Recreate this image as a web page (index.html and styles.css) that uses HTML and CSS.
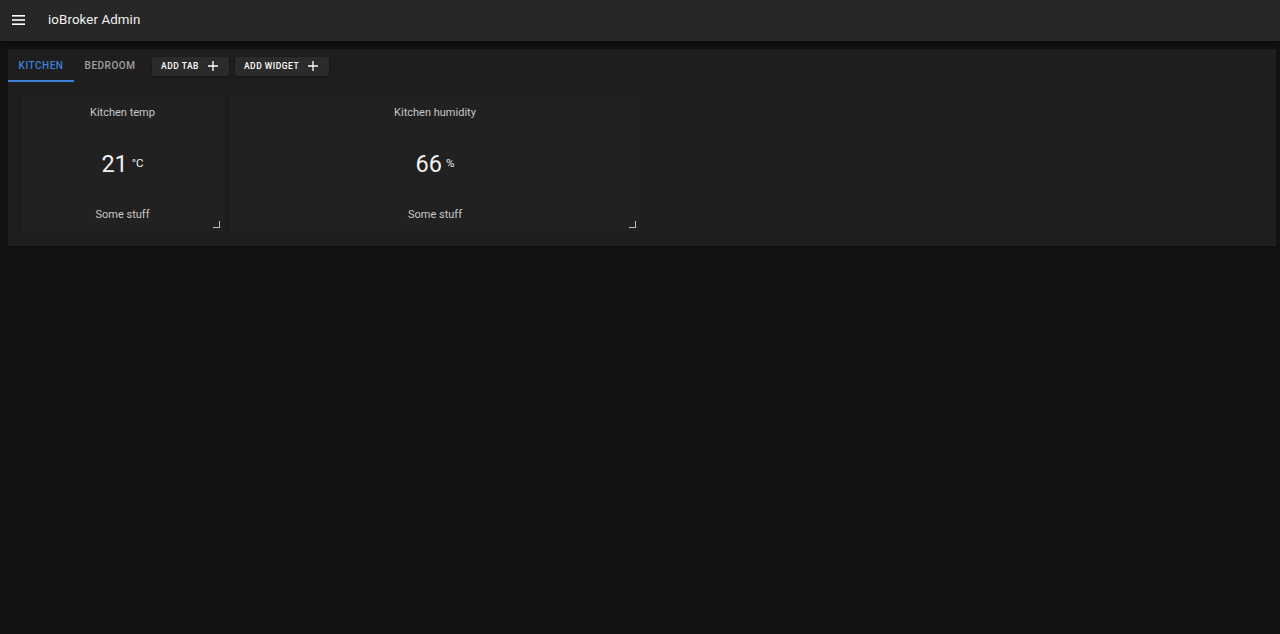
FILE: index.html
```html
<!DOCTYPE html>
<html lang="en">
<head>
<meta charset="utf-8">
<title>ioBroker Admin</title>
<link rel="stylesheet" href="styles.css">
</head>
<body>
<header class="appbar">
  <svg class="menu-icon" width="14" height="10" viewBox="0 0 14 10" aria-hidden="true">
    <rect x="0" y="0" width="13" height="1.6" fill="#fff"/>
    <rect x="0" y="4.2" width="13" height="1.6" fill="#fff"/>
    <rect x="0" y="8.4" width="13" height="1.6" fill="#fff"/>
  </svg>
  <h1 class="title">ioBroker Admin</h1>
</header>
<main class="main">
  <section class="panel">
    <nav class="tabbar">
      <div class="tab tab-active">Kitchen</div>
      <div class="tab">Bedroom</div>
      <button class="btn">Add tab
        <svg class="plus" width="10" height="10" viewBox="0 0 10 10"><path d="M5 0v10M0 5h10" stroke="#fff" stroke-width="1.3"/></svg>
      </button>
      <button class="btn">Add widget
        <svg class="plus" width="10" height="10" viewBox="0 0 10 10"><path d="M5 0v10M0 5h10" stroke="#fff" stroke-width="1.3"/></svg>
      </button>
    </nav>
    <div class="grid">
      <div class="card card-small">
        <div class="card-title">Kitchen temp</div>
        <div class="card-value">21<span class="unit">°C</span></div>
        <div class="card-foot">Some stuff</div>
        <span class="resize"></span>
      </div>
      <div class="card card-wide">
        <div class="card-title">Kitchen humidity</div>
        <div class="card-value">66<span class="unit">%</span></div>
        <div class="card-foot">Some stuff</div>
        <span class="resize"></span>
      </div>
    </div>
  </section>
</main>
</body>
</html>
```
FILE: styles.css
```css
* { box-sizing: border-box; }
html, body { margin: 0; padding: 0; }
body {
  background: #121212;
  font-family: Roboto, "Liberation Sans", sans-serif;
  color: #fff;
  height: 634px;
  overflow: hidden;
}
.appbar {
  height: 41px;
  background: #272727;
  display: flex;
  align-items: center;
  padding-left: 12px;
  padding-bottom: 2px;
  box-shadow: 0 2px 4px rgba(0,0,0,0.5);
}
.menu-icon { display: block; margin-top: 0; }
.title {
  margin: 0 0 0 22px;
  font-size: 13.3px;
  font-weight: 400;
  color: #f2f2f2;
  letter-spacing: 0.1px;
}
.main { padding: 8px 4px 0 8px; }
.panel {
  background: #1e1e1e;
  height: 197px;
  border-right: 1px solid #232323;
  border-bottom: 1px solid #232323;
  box-shadow: 0 1px 2px rgba(0,0,0,0.3);
}
.tabbar {
  height: 33px;
  display: flex;
  align-items: center;
}
.tab {
  height: 33px;
  display: flex;
  align-items: center;
  justify-content: center;
  text-transform: uppercase;
  font-size: 10px;
  font-weight: 500;
  letter-spacing: 0.5px;
  color: #a0a0a0;
  padding: 2px 10px 0;
  border-bottom: 2px solid transparent;
}
.tab-active {
  width: 66px;
  color: #3e7fd6;
  border-bottom-color: #3e7fd6;
}
.tab + .tab { width: 72px; margin-right: 6px; }
.btn {
  height: 19px;
  margin: 1px 6px 0 0;
  padding: 0 11px 0 9px;
  background: #2b2b2b;
  border: none;
  border-radius: 2px;
  color: #fff;
  font-family: Roboto, "Liberation Sans", sans-serif;
  font-size: 8.5px;
  font-weight: 500;
  letter-spacing: 0.5px;
  text-transform: uppercase;
  display: flex;
  align-items: center;
  gap: 9px;
  box-shadow: 0 1px 2px rgba(0,0,0,0.4);
}
.plus { display: block; }
.grid {
  display: flex;
  gap: 8px;
  padding: 15px 0 0 14px;
}
.card {
  position: relative;
  height: 134px;
  background: #212121;
  border: 1px solid #232323;
  display: flex;
  flex-direction: column;
  align-items: center;
  color: #c8c8c8;
}
.card-small { width: 201px; }
.card-wide { width: 408px; }
.card-title {
  font-size: 11px;
  margin-top: 8px;
  height: 14px;
}
.card-value {
  font-size: 23.5px;
  color: #f0f0f0;
  margin-top: 30px;
  display: flex;
  align-items: flex-start;
  line-height: 28px;
}
.unit {
  font-size: 11.5px;
  line-height: 14px;
  margin-left: 4px;
  margin-top: 6px;
}
.card-foot {
  font-size: 11px;
  margin-top: 30px;
}
.resize {
  position: absolute;
  right: 2px;
  bottom: 2px;
  width: 7px;
  height: 7px;
  border-right: 1.5px solid #bdbdbd;
  border-bottom: 1.5px solid #bdbdbd;
}
```
